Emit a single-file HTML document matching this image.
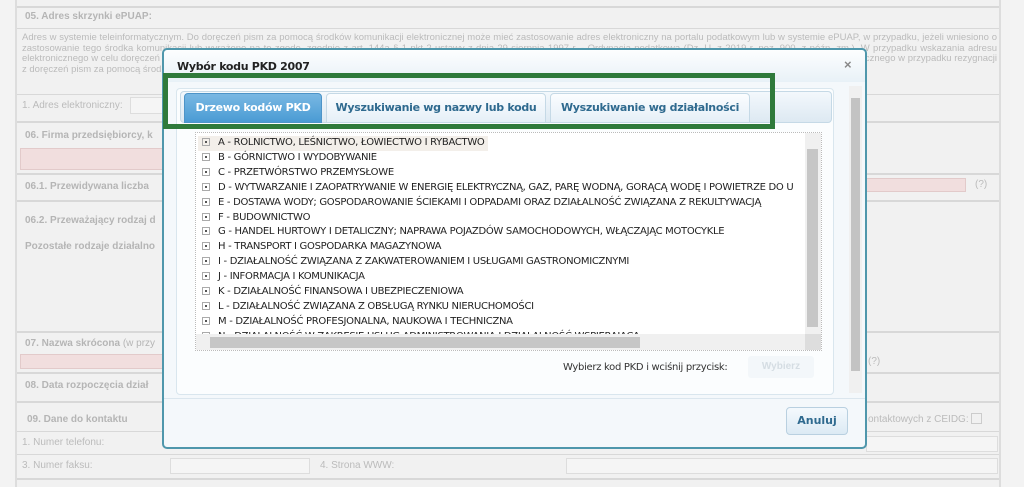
<!DOCTYPE html>
<html><head><meta charset="utf-8"><style>
*{box-sizing:border-box;margin:0;padding:0}
body{width:1024px;height:487px;overflow:hidden;background:#f3f3f3;font-family:"Liberation Sans",sans-serif;position:relative;color:#bbb}
.a{position:absolute}
.bg{left:15px;top:0;width:986px;height:487px;background:#f1f1f1;border-left:2px solid #ddd;border-right:2px solid #ddd}
.hl{left:17px;width:982px;height:2px;background:#d8d8d8}
.t{font-size:10px;color:#bbb;white-space:nowrap}
.tb{font-size:10px;color:#b5b5b5;font-weight:bold;white-space:nowrap}
.pink{background:#f1dede;border:1px solid #e2caca}
.inp{background:#f5f5f5;border:1px solid #ddd}
.dlg{left:162px;top:48px;width:705px;height:401px;background:#f4f8fb;border:2px solid #4f97ac;border-radius:5px}
.tree{font-family:"DejaVu Sans","Liberation Sans",sans-serif;font-size:10px;color:#222;line-height:14.9px;white-space:nowrap;letter-spacing:-0.3px}
.ex{display:inline-block;width:8px;height:8px;border:1px solid #aaa;margin:0 8px 0 4px;vertical-align:-1px;position:relative}
.ex:after{content:"";position:absolute;left:2px;top:2px;width:2px;height:2px;background:#555}
</style></head><body>
<div class="a bg"></div>
<div class="a hl" style="top:6px"></div>
<div class="a tb" style="left:25px;top:11px">05. Adres skrzynki ePUAP:</div>
<div class="a hl" style="top:28px;height:1px"></div>
<div class="a t" style="left:22px;top:33px;line-height:10.5px;width:975px;white-space:normal;overflow:hidden;height:56px;text-align:justify;font-size:9.5px">Adres w systemie teleinformatycznym. Do doręczeń pism za pomocą środków komunikacji elektronicznej może mieć zastosowanie adres elektroniczny na portalu podatkowym lub w systemie ePUAP, w przypadku, jeżeli wniesiono o zastosowanie tego środka komunikacji lub wyrażono na to zgodę, zgodnie z art. 144a § 1 pkt 2 ustawy z dnia 29 sierpnia 1997 r. - Ordynacja podatkowa (Dz. U. z 2019 r. poz. 900, z późn. zm.). W przypadku wskazania adresu elektronicznego w celu doręczeń pism w sprawach określonych w art. 391 § 1 pkt 2 lub art. 391 § 1 pkt 3 w związku z art. 391 § 2 ustawy, należy zaznaczyć rezygnację ze wskazanego adresu elektronicznego w przypadku rezygnacji z doręczeń pism za pomocą środków komunikacji elektronicznej ze wskazanego adresu elektronicznego.</div>
<div class="a hl" style="top:94px;height:1px"></div>
<div class="a t" style="left:22px;top:100px">1. Adres elektroniczny:</div>
<div class="a inp" style="left:130px;top:97px;width:40px;height:17px"></div>
<div class="a hl" style="top:121px"></div>
<div class="a tb" style="left:25px;top:130px">06. Firma przedsiębiorcy, k</div>
<div class="a pink" style="left:20px;top:148px;width:150px;height:22px"></div>
<div class="a hl" style="top:173px"></div>
<div class="a tb" style="left:25px;top:181px">06.1. Przewidywana liczba</div>
<div class="a pink" style="left:866px;top:178px;width:100px;height:14px"></div>
<div class="a t" style="left:975px;top:179px">(?)</div>
<div class="a hl" style="top:200px"></div>
<div class="a tb" style="left:25px;top:215px">06.2. Przeważający rodzaj d</div>
<div class="a tb" style="left:25px;top:241px">Pozostałe rodzaje działalno</div>
<div class="a hl" style="top:331px"></div>
<div class="a tb" style="left:25px;top:338px">07. Nazwa skrócona <span style="font-weight:normal">(w przy</span></div>
<div class="a pink" style="left:20px;top:354px;width:150px;height:15px"></div>
<div class="a t" style="left:868px;top:356px">(?)</div>
<div class="a hl" style="top:372px"></div>
<div class="a tb" style="left:25px;top:380px">08. Data rozpoczęcia dział</div>
<div class="a hl" style="top:401px"></div>
<div class="a tb" style="left:27px;top:414px">09. Dane do kontaktu</div>
<div class="a t" style="left:868px;top:413px">ontaktowych z CEIDG: <span style="display:inline-block;width:11px;height:11px;border:1px solid #ccc;vertical-align:-2px"></span></div>
<div class="a hl" style="top:431px;height:1px"></div>
<div class="a t" style="left:22px;top:437px">1. Numer telefonu:</div>
<div class="a inp" style="left:866px;top:436px;width:132px;height:16px"></div>
<div class="a hl" style="top:454px;height:1px"></div>
<div class="a t" style="left:22px;top:460px">3. Numer faksu:</div>
<div class="a inp" style="left:170px;top:458px;width:140px;height:16px"></div>
<div class="a t" style="left:320px;top:460px">4. Strona WWW:</div>
<div class="a inp" style="left:566px;top:458px;width:432px;height:16px"></div>
<div class="a hl" style="top:478px"></div>

<div class="a dlg">
  <div class="a" style="left:0;top:0;width:701px;height:32px;background:linear-gradient(#fdfeff,#e8f1f7);border-radius:4px 4px 0 0"></div>
  <div class="a" style="left:13px;top:10px;font-size:11px;font-weight:bold;color:#222;font-family:'DejaVu Sans',sans-serif;letter-spacing:-0.3px">Wybór kodu PKD 2007</div>
  <div class="a" style="left:680px;top:7px;font-size:13px;font-weight:bold;color:#888">×</div>
  <div class="a" style="left:12px;top:38px;width:658px;height:307px;background:#fbfdfe;border:1px solid #d9e6ee;border-radius:4px"></div>
  <div class="a" style="left:16px;top:41px;width:652px;height:32px;background:linear-gradient(#f3f8fc,#dde9f2);border:1px solid #c5d9e6;border-radius:4px"></div>
  <div class="a" style="left:20px;top:43px;width:138px;height:30px;background:linear-gradient(#79b8e3,#4a9bd4);border:1px solid #4d94c8;border-radius:4px 4px 0 0;color:#fff;font-weight:bold;font-size:11px;text-align:center;line-height:28px;font-family:'DejaVu Sans',sans-serif;letter-spacing:-0.3px">Drzewo kodów PKD</div>
  <div class="a" style="left:162px;top:43px;width:220px;height:30px;background:linear-gradient(#fbfdff,#e5eff7);border:1px solid #c5d9e6;border-radius:4px 4px 0 0;color:#2f6a8f;font-weight:bold;font-size:11px;text-align:center;line-height:28px;font-family:'DejaVu Sans',sans-serif;letter-spacing:-0.3px">Wyszukiwanie wg nazwy lub kodu</div>
  <div class="a" style="left:386px;top:43px;width:200px;height:30px;background:linear-gradient(#fbfdff,#e5eff7);border:1px solid #c5d9e6;border-radius:4px 4px 0 0;color:#2f6a8f;font-weight:bold;font-size:11px;text-align:center;line-height:28px;font-family:'DejaVu Sans',sans-serif;letter-spacing:-0.3px">Wyszukiwanie wg działalności</div>
  <div class="a" style="left:31px;top:82px;width:627px;height:219px;background:#fff;border:1px dotted #bbb;overflow:hidden">
    <div class="tree" style="position:absolute;left:2px;top:3px">
      <div style="background:#f3efea;display:inline-block;padding-right:3px"><span class="ex"></span>A - ROLNICTWO, LEŚNICTWO, ŁOWIECTWO I RYBACTWO</div><br>
      <div><span class="ex"></span>B - GÓRNICTWO I WYDOBYWANIE</div>
      <div><span class="ex"></span>C - PRZETWÓRSTWO PRZEMYSŁOWE</div>
      <div><span class="ex"></span>D - WYTWARZANIE I ZAOPATRYWANIE W ENERGIĘ ELEKTRYCZNĄ, GAZ, PARĘ WODNĄ, GORĄCĄ WODĘ I POWIETRZE DO U</div>
      <div><span class="ex"></span>E - DOSTAWA WODY; GOSPODAROWANIE ŚCIEKAMI I ODPADAMI ORAZ DZIAŁALNOŚĆ ZWIĄZANA Z REKULTYWACJĄ</div>
      <div><span class="ex"></span>F - BUDOWNICTWO</div>
      <div><span class="ex"></span>G - HANDEL HURTOWY I DETALICZNY; NAPRAWA POJAZDÓW SAMOCHODOWYCH, WŁĄCZAJĄC MOTOCYKLE</div>
      <div><span class="ex"></span>H - TRANSPORT I GOSPODARKA MAGAZYNOWA</div>
      <div><span class="ex"></span>I - DZIAŁALNOŚĆ ZWIĄZANA Z ZAKWATEROWANIEM I USŁUGAMI GASTRONOMICZNYMI</div>
      <div><span class="ex"></span>J - INFORMACJA I KOMUNIKACJA</div>
      <div><span class="ex"></span>K - DZIAŁALNOŚĆ FINANSOWA I UBEZPIECZENIOWA</div>
      <div><span class="ex"></span>L - DZIAŁALNOŚĆ ZWIĄZANA Z OBSŁUGĄ RYNKU NIERUCHOMOŚCI</div>
      <div><span class="ex"></span>M - DZIAŁALNOŚĆ PROFESJONALNA, NAUKOWA I TECHNICZNA</div>
      <div><span class="ex"></span>N - DZIAŁALNOŚĆ W ZAKRESIE USŁUG ADMINISTROWANIA I DZIAŁALNOŚĆ WSPIERAJĄCA</div>
    </div>
    <div class="a" style="left:609px;top:0;width:16px;height:201px;background:#f0f0f0"></div>
    <div class="a" style="left:611px;top:16px;width:11px;height:178px;background:#c6c6c6"></div>
    <div class="a" style="left:0;top:201px;width:625px;height:16px;background:#f0f0f0"></div>
    <div class="a" style="left:14px;top:204px;width:430px;height:11px;background:#c6c6c6"></div>
    <div class="a" style="left:609px;top:201px;width:16px;height:16px;background:#ddd"></div>
  </div>
  <div class="a" style="left:399px;top:312px;font-size:10px;color:#333;font-family:'DejaVu Sans',sans-serif;letter-spacing:-0.3px">Wybierz kod PKD i wciśnij przycisk:</div>
  <div class="a" style="left:584px;top:306px;width:66px;height:22px;background:#f3f7fa;color:#d5dde3;font-size:10px;font-weight:bold;text-align:center;line-height:22px;border-radius:3px">Wybierz</div>
  <div class="a" style="left:685px;top:36px;width:13px;height:307px;background:#f0f0f0"></div>
  <div class="a" style="left:687px;top:48px;width:9px;height:273px;background:#c3c3c3"></div>
  <div class="a" style="left:0;top:348px;width:701px;height:1px;background:#dbe6ee"></div>
  <div class="a" style="left:622px;top:357px;width:62px;height:28px;background:linear-gradient(#f4f9fd,#dceaf4);border:1px solid #b9d0e0;border-radius:4px;color:#2f6a8f;font-weight:bold;font-size:11px;text-align:center;line-height:26px;font-family:'DejaVu Sans',sans-serif">Anuluj</div>
</div>
<div class="a" style="left:163px;top:73px;width:612px;height:56px;border:5px solid #2f7a3b"></div>
</body></html>
